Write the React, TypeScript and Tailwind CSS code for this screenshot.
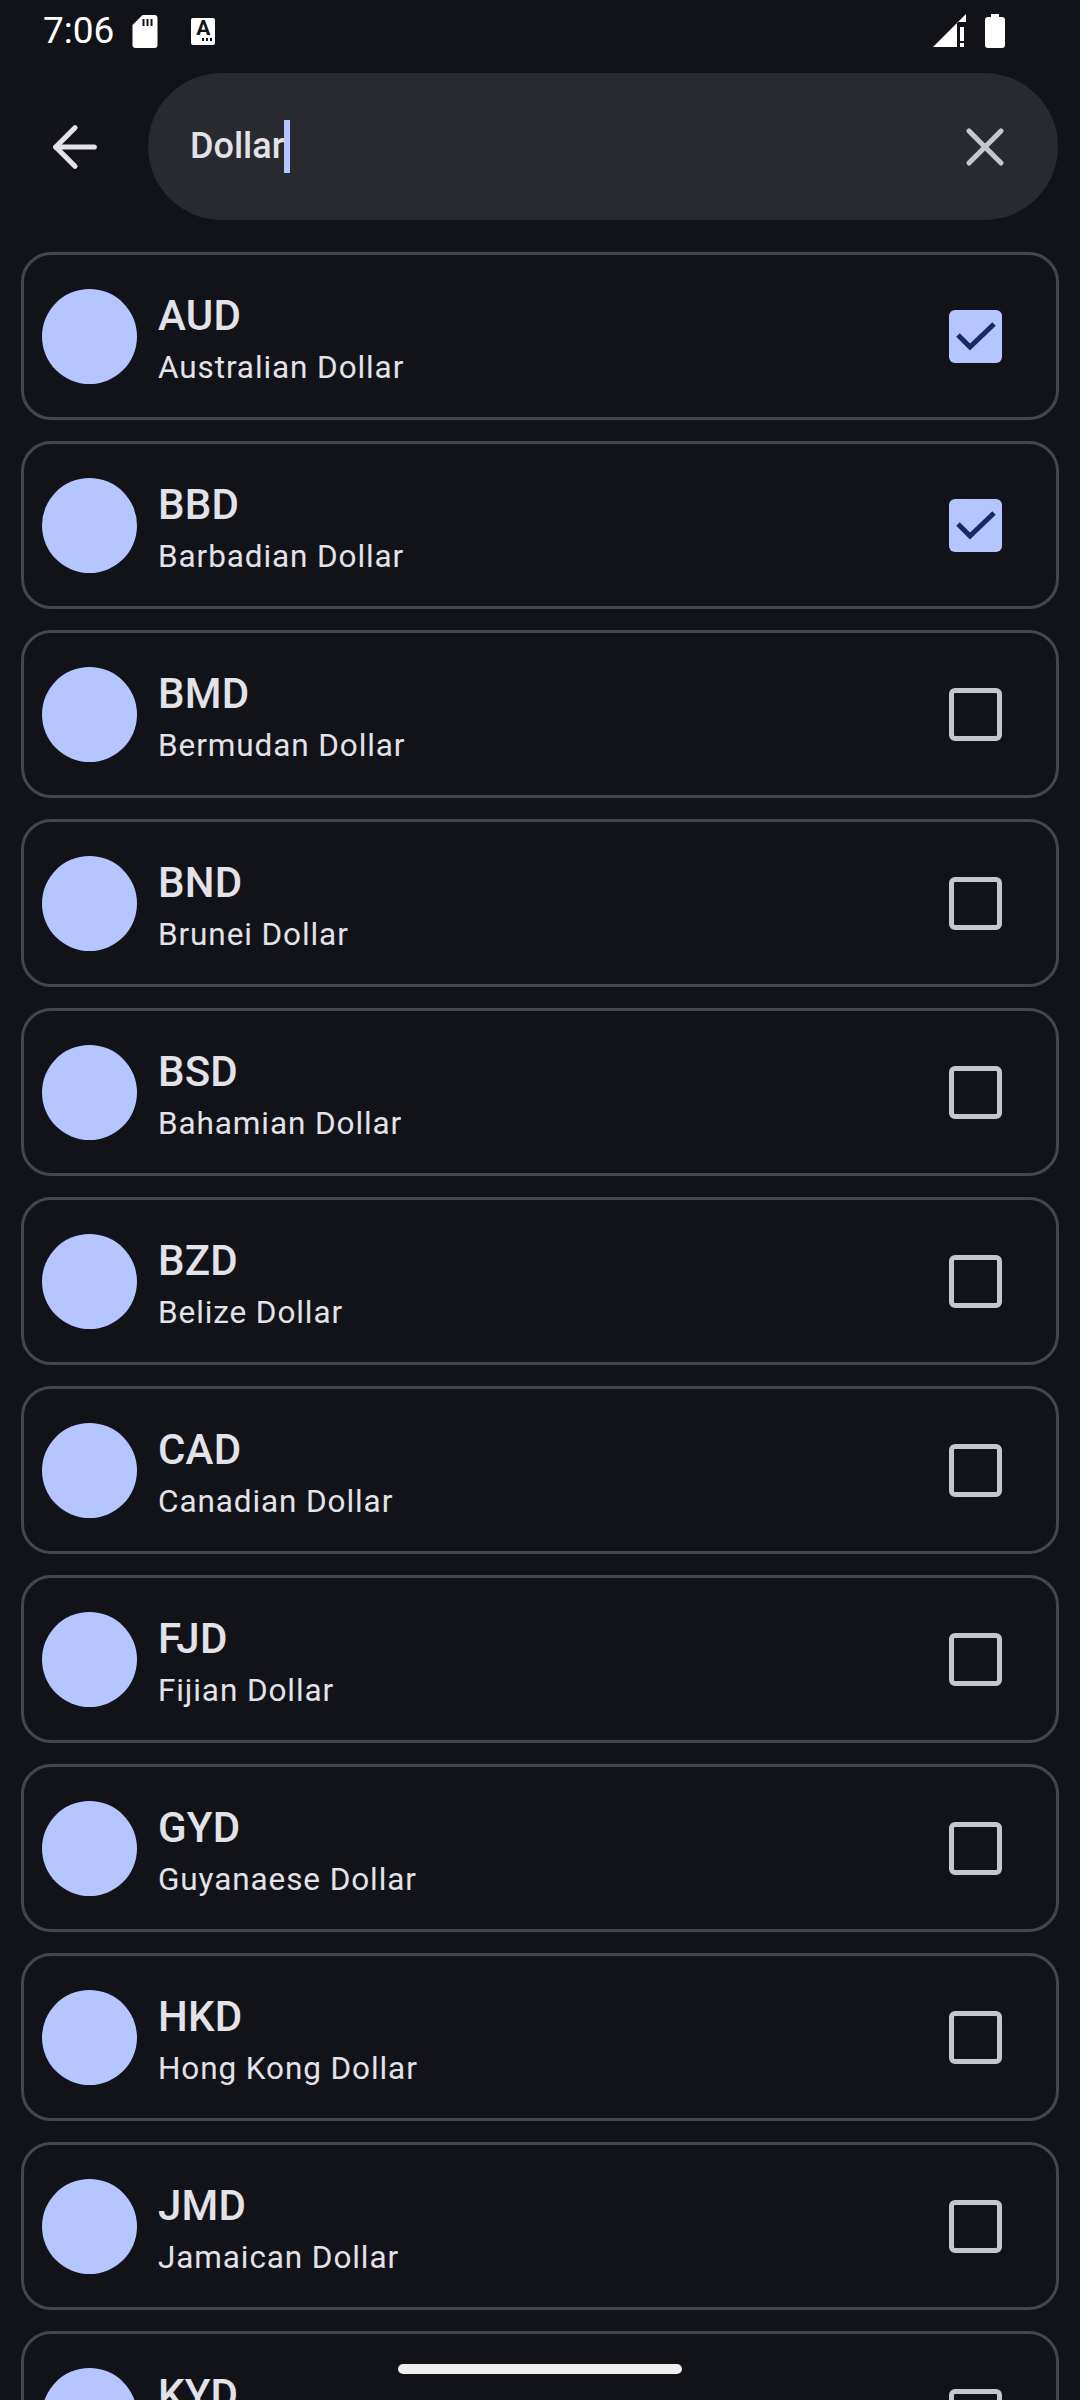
import { ArrowLeft, X } from "lucide-react";

const currencies = [
  { code: "AUD", name: "Australian Dollar", checked: true },
  { code: "BBD", name: "Barbadian Dollar", checked: true },
  { code: "BMD", name: "Bermudan Dollar" },
  { code: "BND", name: "Brunei Dollar" },
  { code: "BSD", name: "Bahamian Dollar" },
  { code: "BZD", name: "Belize Dollar" },
  { code: "CAD", name: "Canadian Dollar" },
  { code: "FJD", name: "Fijian Dollar" },
  { code: "GYD", name: "Guyanaese Dollar" },
  { code: "HKD", name: "Hong Kong Dollar" },
  { code: "JMD", name: "Jamaican Dollar" },
  { code: "KYD", name: "Cayman Islands Dollar" },
];

function StatusBar() {
  return (
    <div className="h-[73px] flex items-start justify-between pl-[43px] pr-[75px] pt-[14px]">
      <div className="flex items-start">
        <span className="text-[37px] leading-[34px] text-white">7:06</span>
        <svg className="ml-[18px] mt-[1px] w-[26px] h-[33px]" viewBox="0 0 25 33">
          <path
            d="M10 0h12a3 3 0 0 1 3 3v27a3 3 0 0 1-3 3H3a3 3 0 0 1-3-3V10z"
            fill="#fff"
          />
          <path d="M10 4h2v7h-2zM14 4h2v7h-2zM18 4h2v7h-2z" fill="#121318" />
        </svg>
        <div className="ml-[33px] mt-[4px] w-[24px] h-[27px] bg-white rounded-[2px] flex flex-col items-center">
          <span className="text-[21px] leading-[20px] font-bold text-[#121318]">A</span>
          <svg className="w-[10px] h-[3px] ml-[8px]" viewBox="0 0 10 3">
            <path d="M0 0h2v3H0zM4 0h2v3H4zM8 0h2v3H8z" fill="#121318" />
          </svg>
        </div>
      </div>
      <div className="flex items-start gap-[19px]">
        <svg className="w-[33px] h-[33px]" viewBox="0 0 33 33">
          <path d="M0 33 33 0v8h-9v25z" fill="#fff" />
          <path d="M27 13h4v14h-4zM27 29h4v4h-4z" fill="#fff" />
        </svg>
        <svg className="w-[20px] h-[34px]" viewBox="0 0 20 34">
          <path
            d="M6 0h8v3h3a3 3 0 0 1 3 3v25a3 3 0 0 1-3 3H3a3 3 0 0 1-3-3V6a3 3 0 0 1 3-3h3z"
            fill="#fff"
          />
        </svg>
      </div>
    </div>
  );
}

function SearchBar() {
  return (
    <div className="flex items-center h-[147px] pr-[22px]">
      <div className="w-[148px] flex justify-center pl-[2px] shrink-0">
        <ArrowLeft size={66} strokeWidth={1.9} color="#e3e2e9" />
      </div>
      <div className="flex-1 h-full rounded-full bg-[#292a2f] flex items-center justify-between pl-[42px] pr-[41px]">
        <div className="flex items-center">
          <span className="text-[36px] leading-[53px] font-medium text-[#e3e2e9]">Dollar</span>
          <span className="w-[6px] h-[53px] bg-[#b4c5ff]" />
        </div>
        <X size={64} strokeWidth={1.9} color="#c5c6d0" />
      </div>
    </div>
  );
}

function CurrencyRow({ code, name, checked }: { code: string; name: string; checked?: boolean }) {
  return (
    <div className="h-[168px] shrink-0 flex items-center border-[3px] border-[#44464f] rounded-[30px] pl-[18px] pr-[54px]">
      <div className="w-[95px] h-[95px] rounded-full bg-[#b4c5ff] shrink-0" />
      <div className="flex-1 ml-[21px] flex flex-col">
        <span className="text-[42px] leading-[62px] font-medium tracking-[0.2px] text-[#e3e2e9]">{code}</span>
        <span className="text-[31.5px] leading-[41px] tracking-[0.9px] text-[#e3e2e9]">{name}</span>
      </div>
      {checked ? (
        <div className="w-[53px] h-[53px] rounded-[6px] bg-[#b4c5ff] flex items-center justify-center">
          <svg className="w-[40px] h-[30px]" viewBox="0 0 40 30">
            <path d="M2 14 14 26 38 3" fill="none" stroke="#162c60" strokeWidth="5" />
          </svg>
        </div>
      ) : (
        <div className="w-[53px] h-[53px] rounded-[6px] border-[5px] border-[#c5c6d0]" />
      )}
    </div>
  );
}

export default function App() {
  return (
    <div
      className="relative w-[1080px] h-[2400px] overflow-hidden bg-[#121318]"
      style={{ fontFamily: "Roboto, sans-serif" }}
    >
      <StatusBar />
      <SearchBar />
      <div className="flex flex-col gap-[21px] pt-[32px] pl-[21px] pr-[21px]">
        {currencies.map((c) => (
          <CurrencyRow key={c.code} code={c.code} name={c.name} checked={c.checked} />
        ))}
      </div>
      <div className="absolute left-[398px] top-[2364px] w-[284px] h-[10px] rounded-full bg-[#eeeeee]" />
    </div>
  );
}
